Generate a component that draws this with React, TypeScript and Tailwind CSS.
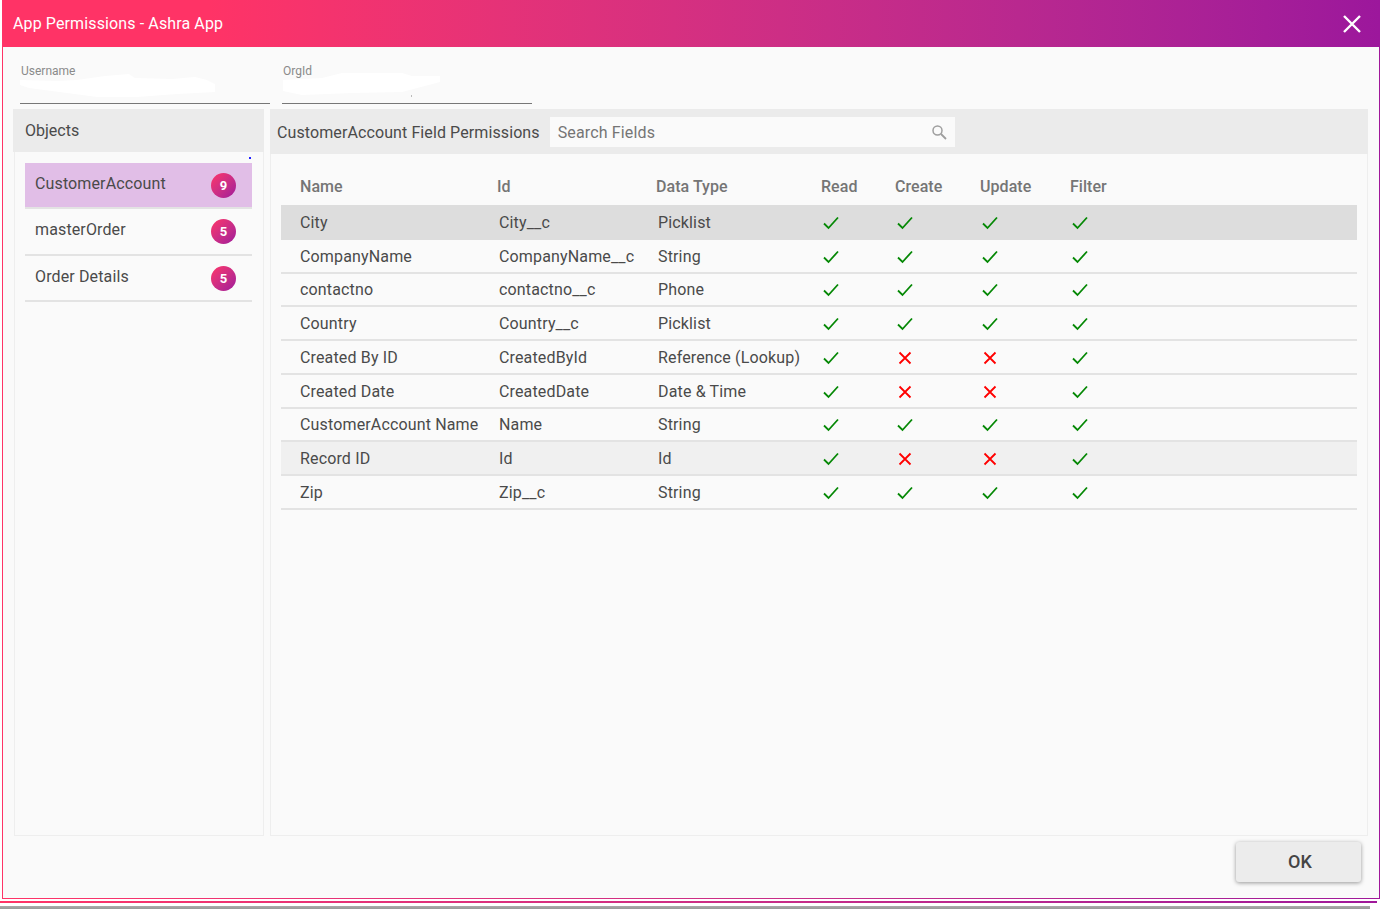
const rows: [string, string, string, boolean, boolean, boolean, boolean][] = [
  ['City', 'City__c', 'Picklist', true, true, true, true],
  ['CompanyName', 'CompanyName__c', 'String', true, true, true, true],
  ['contactno', 'contactno__c', 'Phone', true, true, true, true],
  ['Country', 'Country__c', 'Picklist', true, true, true, true],
  ['Created By ID', 'CreatedById', 'Reference (Lookup)', true, false, false, true],
  ['Created Date', 'CreatedDate', 'Date & Time', true, false, false, true],
  ['CustomerAccount Name', 'Name', 'String', true, true, true, true],
  ['Record ID', 'Id', 'Id', true, false, false, true],
  ['Zip', 'Zip__c', 'String', true, true, true, true],
];

const objects = [
  { name: 'CustomerAccount', count: 9, active: true },
  { name: 'masterOrder', count: 5, active: false },
  { name: 'Order Details', count: 5, active: false },
];

function Check() {
  return (
    <svg width="16" height="14" viewBox="0 0 16 14" fill="none" className="text-[#058805]">
      <path d="M1 7.5L5.5 12L15 1.5" stroke="currentColor" strokeWidth="1.8" />
    </svg>
  );
}

function Cross() {
  return (
    <svg width="16" height="14" viewBox="0 0 16 14" fill="none" className="text-[#ff0000]">
      <path d="M2.5 1.5L13.5 12.5M13.5 1.5L2.5 12.5" stroke="currentColor" strokeWidth="1.8" />
    </svg>
  );
}

function Mark({ ok }: { ok: boolean }) {
  return ok ? <Check /> : <Cross />;
}

export default function App() {
  return (
    <div className="w-[1381px] h-[909px] bg-white overflow-hidden font-['Roboto',sans-serif] text-[#4a4a4a]">
      <div className="ml-[2px] w-[1378px] h-[899px] p-[1px] pt-0 bg-gradient-to-r from-[#ff3366] to-[#a0189a]">
        <div className="h-full flex flex-col bg-[#fafafa]">
          {/* Header */}
          <div className="-mx-[1px] h-[47px] shrink-0 flex items-center justify-between pl-[11px] pr-[17px] bg-gradient-to-r from-[#ff3366] from-[15%] to-[#9c179c]">
            <span className="text-[16px] tracking-[0.12px] text-white">App Permissions - Ashra App</span>
            <svg width="22" height="22" viewBox="0 0 22 22" fill="none">
              <path d="M3 3L19 19M19 3L3 19" stroke="white" strokeWidth="2.4" />
            </svg>
          </div>

          {/* Username / OrgId */}
          <div className="h-[62px] shrink-0 flex gap-[12px] pl-[17px]">
            <div className="relative w-[250px] h-[57px] border-b border-[#777]">
              <span className="absolute left-[1px] top-[17px] text-[12px] leading-[14px] text-[#8a8a8a]">Username</span>
              <svg className="absolute left-[-3px] top-[27px]" width="200" height="26" viewBox="0 0 200 26">
                <path d="M3 6L40 7L60 6L88 2L112 0L118 4L155 5L178 3L190 6L198 10L198 18L160 20L120 23L80 23L50 19L12 14L3 11Z" fill="white" />
              </svg>
            </div>
            <div className="relative w-[250px] h-[57px] border-b border-[#777]">
              <span className="absolute left-[1px] top-[17px] text-[12px] leading-[14px] text-[#8a8a8a]">OrgId</span>
              <svg className="absolute left-0 top-[25px]" width="160" height="26" viewBox="0 0 160 26">
                <path d="M1 8L40 6L60 1L120 1L130 4L158 4L158 10L120 20L70 21L20 23L1 19Z" fill="white" />
              </svg>
              <span className="absolute left-[129px] top-[48px] w-[1px] h-[2px] bg-[#bbbbbb]" />
            </div>
          </div>

          {/* Panels */}
          <div className="h-[727px] shrink-0 flex gap-[6px] pl-[10px] pr-[11px]">
            <div className="w-[251px] flex flex-col">
              <div className="h-[43px] shrink-0 flex items-center pl-[12px] bg-[#ebebeb] text-[16px]">Objects</div>
              <div className="relative flex-1 ml-[1px] border-x border-b border-[#eeeeee] pt-[11px] pl-[10px] pr-[11px]">
                <span className="absolute right-[12px] top-[5px] w-[2px] h-[2px] bg-[#2222ff]" />
                {objects.map((o, i) => (
                  <div
                    key={o.name}
                    className={`flex items-start justify-between pl-[10px] pr-[16px] border-b-2 border-[#e3e3e3] ${i === 1 ? 'h-[47px]' : 'h-[46px]'} ${o.active ? 'bg-[#e1bee7]' : ''}`}
                  >
                    <span className="text-[16px] leading-[18px] mt-[12px] tracking-[0.13px]">{o.name}</span>
                    <span className="w-[25px] h-[25px] mt-[10px] rounded-full flex items-center justify-center text-[13px] font-bold text-white bg-gradient-to-br from-[#ff3366] to-[#a0189a]">
                      {o.count}
                    </span>
                  </div>
                ))}
              </div>
            </div>

            <div className="flex-1 flex flex-col">
              <div className="h-[45px] shrink-0 flex items-center pl-[7px] bg-[#ebebeb]">
                <span className="text-[16px] leading-[20px] mt-[2px] tracking-[0.1px]">CustomerAccount Field Permissions</span>
                <div className="ml-[10px] w-[405px] h-[30px] flex items-center justify-between pl-[8px] pr-[8px] bg-[#fafafa]">
                  <span className="text-[16px] leading-[20px] mt-[2px] tracking-[0.15px] text-[#757575]">Search Fields</span>
                  <svg width="16" height="16" viewBox="0 0 16 16" fill="none" className="text-[#9e9e9e]">
                    <circle cx="6.5" cy="6.5" r="4.5" stroke="currentColor" strokeWidth="1.5" />
                    <path d="M10 10L15 15" stroke="currentColor" strokeWidth="1.8" />
                  </svg>
                </div>
              </div>
              <div className="flex-1 border-x border-b border-[#eeeeee] pl-[10px] pr-[10px]">
                <div className="h-[51px] flex items-end pb-[8px] pl-[19px] text-[16px] leading-[20px] font-medium tracking-[0.05px] text-[#757575]">
                  <span className="w-[197px]">Name</span>
                  <span className="w-[159px]">Id</span>
                  <span className="w-[165px]">Data Type</span>
                  <span className="w-[74px]">Read</span>
                  <span className="w-[85px]">Create</span>
                  <span className="w-[90px]">Update</span>
                  <span>Filter</span>
                </div>
                {rows.map((r, i) => (
                  <div
                    key={r[0]}
                    className={`flex items-center pl-[19px] border-b-2 border-[#e3e3e3] text-[16px] leading-[20px] tracking-[0.15px] ${i === 0 ? 'h-[34.75px] pt-[4px] bg-[#dddddd] border-b-[#dddddd]' : 'h-[33.75px] pt-[2px]'} ${i === 7 ? 'bg-[#f0f0f0]' : ''}`}
                  >
                    <span className="w-[199px]">{r[0]}</span>
                    <span className="w-[159px]">{r[1]}</span>
                    <span className="w-[165px]">{r[2]}</span>
                    <span className="w-[74px] flex"><Mark ok={r[3]} /></span>
                    <span className="w-[85px] flex"><Mark ok={r[4]} /></span>
                    <span className="w-[90px] flex"><Mark ok={r[5]} /></span>
                    <span className="flex"><Mark ok={r[6]} /></span>
                  </div>
                ))}
              </div>
            </div>
          </div>

          {/* Footer */}
          <div className="flex-1 flex items-start justify-end pt-[6px] pr-[18px]">
            <button className="w-[125px] h-[40px] pl-[3px] pb-[2px] rounded-[3px] bg-[#ececec] text-[18px] font-medium text-[#444] shadow-[0_1px_4px_rgba(0,0,0,0.4)]">
              OK
            </button>
          </div>
        </div>
      </div>
      <div className="mt-[2px] w-[1377px] h-[2px] bg-gradient-to-r from-[#ff3366] to-[#a0189a]" />
      <div className="mt-[3px] w-[1370px] h-[3px] bg-gradient-to-b from-[#aaaaaa] to-[#999999]" />
    </div>
  );
}
